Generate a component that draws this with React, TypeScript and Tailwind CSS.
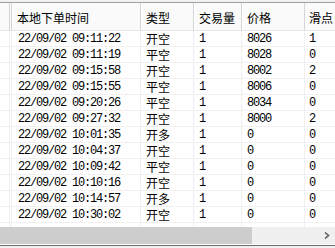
import React from "react";

type Row = { time: string; kind: string; qty: string; price: string; slip: string };

const rows: Row[] = [
  { time: "22/09/02 09:11:22", kind: "开空", qty: "1", price: "8026", slip: "1" },
  { time: "22/09/02 09:11:19", kind: "平空", qty: "1", price: "8028", slip: "0" },
  { time: "22/09/02 09:15:58", kind: "开空", qty: "1", price: "8002", slip: "2" },
  { time: "22/09/02 09:15:55", kind: "平空", qty: "1", price: "8006", slip: "0" },
  { time: "22/09/02 09:20:26", kind: "平空", qty: "1", price: "8034", slip: "0" },
  { time: "22/09/02 09:27:32", kind: "开空", qty: "1", price: "8000", slip: "2" },
  { time: "22/09/02 10:01:35", kind: "开多", qty: "1", price: "0", slip: "0" },
  { time: "22/09/02 10:04:37", kind: "开空", qty: "1", price: "0", slip: "0" },
  { time: "22/09/02 10:09:42", kind: "平空", qty: "1", price: "0", slip: "0" },
  { time: "22/09/02 10:10:16", kind: "开空", qty: "1", price: "0", slip: "0" },
  { time: "22/09/02 10:14:57", kind: "开多", qty: "1", price: "0", slip: "0" },
  { time: "22/09/02 10:30:02", kind: "开空", qty: "1", price: "0", slip: "0" },
];

const mono = "font-['Liberation_Mono','Noto_Sans_CJK_SC',monospace] text-[12px] tracking-[-1.2px]";
const cjk = "font-['Noto_Sans_CJK_SC',sans-serif] text-[12px]";

const HeadCell = ({ w, label }: { w: string; label: string }) => (
  <div className={`${w} shrink-0 h-full flex border-r border-[#d5d5d5]`}>
    <div className="flex-1 border-l border-white pl-[4px] pt-[8px] leading-[14px] text-black whitespace-nowrap overflow-hidden">
      {label}
    </div>
  </div>
);

const Cells = ({ r }: { r?: Row }) => (
  <>
    <div className="w-[10px] shrink-0 border-r border-[#f0f0f0]" />
    <div className="w-[2px] shrink-0 border-r border-[#f0f0f0]" />
    <div className={`w-[129px] shrink-0 border-r border-[#f0f0f0] pl-[6px] pt-[2px] ${mono}`}>{r?.time}</div>
    <div className={`w-[53px] shrink-0 border-r border-[#f0f0f0] pl-[5px] pt-[1px] ${cjk}`}>{r?.kind}</div>
    <div className={`w-[48px] shrink-0 border-r border-[#f0f0f0] pl-[5px] pt-[2px] ${mono}`}>{r?.qty}</div>
    <div className={`w-[63px] shrink-0 border-r border-[#f0f0f0] pl-[5px] pt-[2px] ${mono}`}>{r?.price}</div>
    <div className={`flex-1 pl-[4px] pt-[2px] ${mono}`}>{r?.slip}</div>
  </>
);

export default function App() {
  return (
    <div className="w-[335px] h-[248px] flex flex-col bg-white overflow-hidden text-black">
      <div className="h-[2px] bg-[#f0f0f0]" />
      <div className="h-[1px] bg-[#a0a0a0]" />
      {/* column headers */}
      <div className={`h-[28px] flex bg-[#fafafa] border-b border-[#e5e5e5] ${cjk}`}>
        <div className="w-[10px] shrink-0 border-r border-[#d5d5d5]" />
        <div className="w-[2px] shrink-0 border-r border-[#d5d5d5]" />
        <HeadCell w="w-[129px]" label="本地下单时间" />
        <HeadCell w="w-[53px]" label="类型" />
        <HeadCell w="w-[48px]" label="交易量" />
        <HeadCell w="w-[63px]" label="价格" />
        <div className="flex-1 pl-[4px] pt-[8px] leading-[14px] whitespace-nowrap">滑点</div>
      </div>
      {/* rows */}
      <div className="flex-1 flex flex-col">
        {rows.map((r) => (
          <div key={r.time} className="h-[16px] flex border-b border-[#f0f0f0] leading-[13px] whitespace-nowrap">
            <Cells r={r} />
          </div>
        ))}
        <div className="flex-1 flex">
          <Cells />
        </div>
      </div>
      {/* horizontal scrollbar */}
      <div className="h-[17px] flex bg-[#f0f0f0]">
        <div className="w-[252px] bg-[#cdcdcd]" />
        <div className="flex-1 flex items-center justify-end pr-[5px]">
          <svg width="6" height="7" viewBox="0 0 6 7" fill="none">
            <path d="M1 0.5 L4.5 3.5 L1 6.5" stroke="#606060" strokeWidth="1.6" />
          </svg>
        </div>
      </div>
      <div className="h-[1px] bg-white" />
      <div className="h-[1px] bg-[#6d6d6d]" />
      <div className="h-[2px] bg-[#f0f0f0]" />
    </div>
  );
}
